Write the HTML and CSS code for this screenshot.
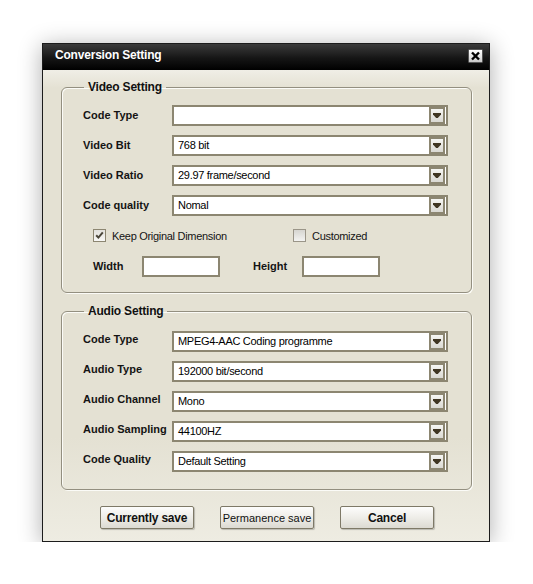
FILE: index.html
```html
<!DOCTYPE html>
<html>
<head>
<meta charset="utf-8">
<link rel="stylesheet" href="styles.css">
</head>
<body>
<div class="window">
  <div class="titlebar">
    <span class="title">Conversion Setting</span>
    <span class="close">
      <svg width="15" height="14" viewBox="0 0 15 14"><path d="M4 3.5 L11 10.5 M11 3.5 L4 10.5" stroke="#000" stroke-width="2.4"/></svg>
    </span>
  </div>
  <div class="content">
    <fieldset class="group video">
      <legend>Video Setting</legend>
      <div class="rows">
        <span class="lbl">Code Type</span>
        <div class="select"><span class="val"></span><span class="drop"><svg width="8" height="5" viewBox="0 0 8 5"><path d="M0 0H8V1.5L4.8 5H3.2L0 1.5Z" fill="#3f3522"/></svg></span></div>
        <span class="lbl">Video Bit</span>
        <div class="select"><span class="val">768 bit</span><span class="drop"><svg width="8" height="5" viewBox="0 0 8 5"><path d="M0 0H8V1.5L4.8 5H3.2L0 1.5Z" fill="#3f3522"/></svg></span></div>
        <span class="lbl">Video Ratio</span>
        <div class="select"><span class="val">29.97 frame/second</span><span class="drop"><svg width="8" height="5" viewBox="0 0 8 5"><path d="M0 0H8V1.5L4.8 5H3.2L0 1.5Z" fill="#3f3522"/></svg></span></div>
        <span class="lbl">Code quality</span>
        <div class="select"><span class="val">Nomal</span><span class="drop"><svg width="8" height="5" viewBox="0 0 8 5"><path d="M0 0H8V1.5L4.8 5H3.2L0 1.5Z" fill="#3f3522"/></svg></span></div>
      </div>
      <div class="checks">
        <div class="check-item first">
          <span class="box">
            <svg width="11" height="11" viewBox="0 0 11 11"><path d="M2.2 5.2 L4.4 7.6 L8.8 2.4" stroke="#4a463a" stroke-width="2" fill="none"/></svg>
          </span>
          <span class="check-text">Keep Original Dimension</span>
        </div>
        <div class="check-item">
          <span class="box off"></span>
          <span class="check-text">Customized</span>
        </div>
      </div>
      <div class="dims">
        <span class="dim-lbl">Width</span>
        <span class="field"></span>
        <span class="dim-lbl second">Height</span>
        <span class="field"></span>
      </div>
    </fieldset>

    <fieldset class="group audio">
      <legend>Audio Setting</legend>
      <div class="rows">
        <span class="lbl">Code Type</span>
        <div class="select"><span class="val">MPEG4-AAC Coding programme</span><span class="drop"><svg width="8" height="5" viewBox="0 0 8 5"><path d="M0 0H8V1.5L4.8 5H3.2L0 1.5Z" fill="#3f3522"/></svg></span></div>
        <span class="lbl">Audio Type</span>
        <div class="select"><span class="val">192000 bit/second</span><span class="drop"><svg width="8" height="5" viewBox="0 0 8 5"><path d="M0 0H8V1.5L4.8 5H3.2L0 1.5Z" fill="#3f3522"/></svg></span></div>
        <span class="lbl">Audio Channel</span>
        <div class="select"><span class="val">Mono</span><span class="drop"><svg width="8" height="5" viewBox="0 0 8 5"><path d="M0 0H8V1.5L4.8 5H3.2L0 1.5Z" fill="#3f3522"/></svg></span></div>
        <span class="lbl">Audio Sampling</span>
        <div class="select"><span class="val">44100HZ</span><span class="drop"><svg width="8" height="5" viewBox="0 0 8 5"><path d="M0 0H8V1.5L4.8 5H3.2L0 1.5Z" fill="#3f3522"/></svg></span></div>
        <span class="lbl">Code Quality</span>
        <div class="select"><span class="val">Default Setting</span><span class="drop"><svg width="8" height="5" viewBox="0 0 8 5"><path d="M0 0H8V1.5L4.8 5H3.2L0 1.5Z" fill="#3f3522"/></svg></span></div>
      </div>
    </fieldset>

    <div class="buttons">
      <button class="btn bold">Currently save</button>
      <button class="btn">Permanence save</button>
      <button class="btn bold">Cancel</button>
    </div>
  </div>
</div>
</body>
</html>
```

FILE: styles.css
```css
html, body {
  margin: 0;
  padding: 0;
  background: #ffffff;
}

body {
  font-family: "Liberation Sans", Arial, sans-serif;
  color: #111;
}

.window {
  position: relative;
  box-sizing: border-box;
  width: 448px;
  height: 499px;
  margin: 43px 0 0 42px;
  border: 1px solid #1c1c1c;
  display: flex;
  flex-direction: column;
  box-shadow: 0 3px 22px rgba(0, 0, 0, 0.32);
  background: #e4e1d3;
}

.titlebar {
  height: 26px;
  flex: none;
  display: flex;
  align-items: flex-start;
  justify-content: space-between;
  background: linear-gradient(#3b3b3b, #151515 55%, #000);
}

.title {
  color: #fff;
  font-weight: bold;
  font-size: 12px;
  line-height: 14px;
  letter-spacing: -0.2px;
  padding: 4px 0 0 12px;
}

.close {
  display: block;
  width: 15px;
  height: 14px;
  margin: 5px 6px 0 0;
  box-sizing: border-box;
  border: 1px solid #555;
  border-radius: 1px;
  background: linear-gradient(#ffffff, #e2e2e2 60%, #c8c8c8);
}

.close svg {
  display: block;
  margin: -1px;
}

.content {
  flex: 1;
  background: linear-gradient(#f0eee6 0, #e4e1d3 18px, #e4e1d3 78%, #eeece2 100%);
}

.group {
  margin: 10px 0 0 18px;
  width: 411px;
  box-sizing: border-box;
  padding: 11px 0 15px 21px;
  border: 1px solid #938f80;
  border-radius: 6px;
  box-shadow: 1px 1px 0 #fbfbf7, inset 1px 1px 0 #fbfbf7;
  min-width: 0;
}

.group legend {
  margin-left: 1px;
  padding: 0 4px;
  font-size: 12px;
  line-height: 14px;
  font-weight: bold;
  letter-spacing: -0.2px;
  color: #111;
}

.group.audio {
  margin-top: 11px;
  padding-top: 13px;
  padding-bottom: 17px;
}

.rows {
  display: grid;
  grid-template-columns: 89px 276px;
  row-gap: 9px;
  align-items: center;
}

.lbl {
  font-size: 11px;
  font-weight: bold;
  line-height: 13px;
  color: #141414;
  white-space: nowrap;
}

.audio .lbl {
  padding-bottom: 4px;
}

.select {
  box-sizing: border-box;
  height: 21px;
  border: 2px solid #8c8671;
  background: #fff;
  display: flex;
  align-items: stretch;
}

.val {
  flex: 1;
  padding-left: 4px;
  font-size: 11px;
  letter-spacing: -0.3px;
  line-height: 17px;
  color: #000;
  white-space: nowrap;
}

.drop {
  box-sizing: border-box;
  width: 16px;
  margin-right: 1px;
  border: 2px solid #8c8671;
  background: linear-gradient(#f6f6f3, #e6e5e0 55%, #d9d8d2);
  display: flex;
  align-items: center;
  justify-content: center;
}

.drop svg {
  display: block;
}

.checks {
  display: flex;
  align-items: center;
  margin: 13px 0 0 10px;
  height: 13px;
}

.check-item {
  display: flex;
  align-items: center;
  gap: 6px;
}

.check-item.first {
  width: 200px;
}

.box {
  box-sizing: border-box;
  width: 13px;
  height: 13px;
  border: 1px solid #8c8671;
  background: linear-gradient(#e2e1dc, #f8f8f6);
  display: flex;
  align-items: center;
  justify-content: center;
}

.box.off {
  border-color: #9a9588;
  background: linear-gradient(#d6d5d0, #f3f3f1);
}

.box svg {
  display: block;
}

.check-text {
  font-size: 11px;
  letter-spacing: -0.3px;
  line-height: 13px;
  color: #141414;
  white-space: nowrap;
  padding-top: 1px;
}

.dims {
  display: flex;
  align-items: center;
  margin: 14px 0 0 10px;
}

.dim-lbl {
  width: 49px;
  font-size: 11px;
  font-weight: bold;
  line-height: 13px;
  color: #141414;
}

.dim-lbl.second {
  margin-left: 33px;
}

.field {
  box-sizing: border-box;
  width: 78px;
  height: 21px;
  border: 2px solid #8c8671;
  background: #fff;
}

.buttons {
  display: flex;
  gap: 26px;
  margin: 16px 0 0 57px;
}

.btn {
  box-sizing: border-box;
  width: 94px;
  height: 23px;
  padding: 0;
  border: 1px solid #7e7967;
  border-radius: 2px;
  background: linear-gradient(#fdfdfc, #eeede8 50%, #dcdad2);
  box-shadow: 1px 1px 1px rgba(0, 0, 0, 0.22);
  font-family: "Liberation Sans", Arial, sans-serif;
  font-size: 11px;
  color: #111;
}

.btn.bold {
  font-size: 12px;
  font-weight: bold;
  letter-spacing: -0.2px;
}
```
